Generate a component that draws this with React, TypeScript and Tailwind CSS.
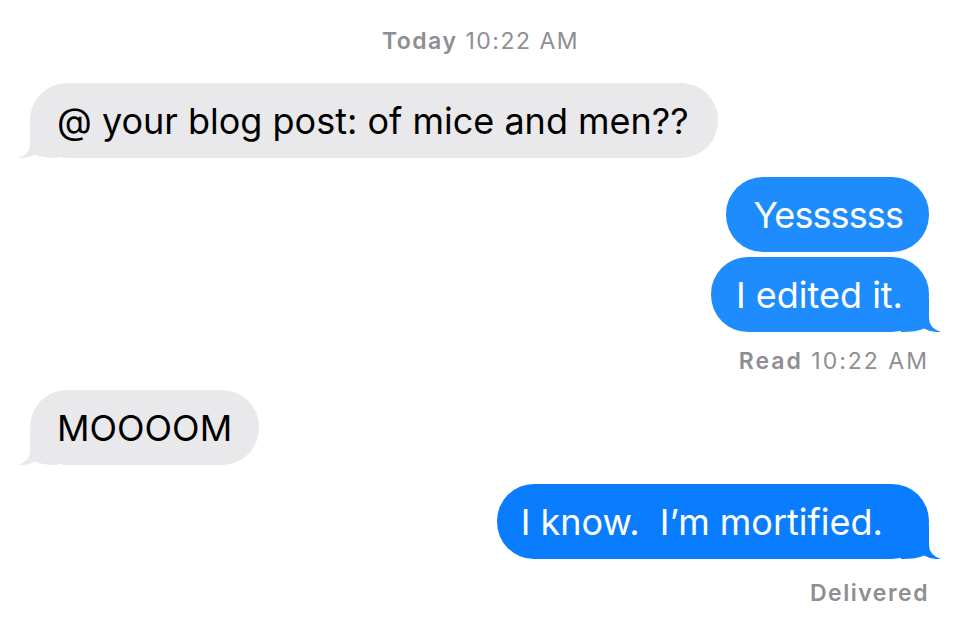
import React from "react";

type Side = "in" | "out";

function Tail({ side, color }: { side: Side; color: string }) {
  // little curled tail at the bottom corner of the last bubble in a group
  return (
    <svg
      width="40"
      height="34"
      viewBox="0 0 40 34"
      className={`absolute bottom-0 ${side === "in" ? "-left-[12px]" : "-right-[12px] -scale-x-100"}`}
    >
      <path d="M12 0 L12 20 Q12 30 0 34 Q10 34.6 17 30.5 Q24 34 40 34 L40 0 Z" fill={color} />
    </svg>
  );
}

function Bubble({
  side,
  text,
  tail,
  color,
  pad = "px-[27px]",
  className = "",
}: {
  side: Side;
  text: string;
  tail?: boolean;
  color?: string;
  pad?: string;
  className?: string;
}) {
  const bg = side === "in" ? "#e9e9eb" : color || "#1e8cfd";
  return (
    <div className={`flex ${side === "in" ? "justify-start pl-[30px]" : "justify-end pr-[40px]"} ${className}`}>
      <div
        className={`relative h-[75px] rounded-[37px] flex items-center ${pad} text-[36px] whitespace-pre ${
          side === "in" ? "text-black" : "text-white"
        }`}
        style={{ backgroundColor: bg }}
      >
        {tail && <Tail side={side} color={bg} />}
        <span className="relative">{text}</span>
      </div>
    </div>
  );
}

export default function App() {
  return (
    <div
      className="w-[969px] h-[634px] bg-white overflow-hidden flex flex-col pt-[28px]"
      style={{ fontFamily: "Inter, 'Liberation Sans', sans-serif" }}
    >
      <div className="text-center pr-[8px] text-[23px] leading-[26px] tracking-[1.5px] text-[#8e8e93]">
        <span className="font-semibold">Today</span> 10:22 AM
      </div>

      <Bubble side="in" text="@ your blog post: of mice and men??" tail pad="pl-[27px] pr-[29px]" className="mt-[29px]" />

      <Bubble side="out" text="Yessssss" pad="pl-[28px] pr-[26px] tracking-[-0.9px]" className="mt-[19px]" />
      <Bubble side="out" text="I edited it." tail pad="pl-[25px] pr-[26px]" className="mt-[5px]" />

      <div className="mt-[16px] pr-[40px] text-right text-[23px] leading-[26px] tracking-[2px] text-[#8e8e93]">
        <span className="font-semibold">Read</span> 10:22 AM
      </div>

      <Bubble side="in" text="MOOOOM" tail className="mt-[16px]" />

      <Bubble
        side="out"
        text="I know.  I’m mortified."
        tail
        color="#0a7dff"
        pad="pl-[24px] pr-[46px]"
        className="mt-[19px]"
      />

      <div className="mt-[21px] pr-[40px] text-right text-[23px] leading-[26px] tracking-[1.5px] font-semibold text-[#8e8e93]">
        Delivered
      </div>
    </div>
  );
}
